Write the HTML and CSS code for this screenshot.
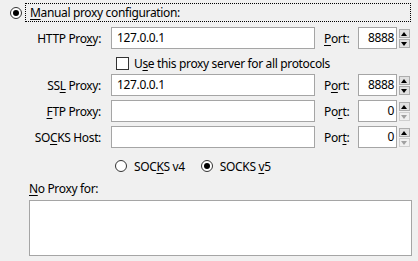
FILE: index.html
```html
<!DOCTYPE html>
<html lang="en">
<head>
  <meta charset="UTF-8">
  <title>Connection Settings</title>
  <link rel="stylesheet" href="styles.css">
</head>
<body>
  <div class="panel">
    <div class="mode">
      <span class="radio on"></span>
      <span class="focus"><u>M</u>anual proxy configuration:</span>
    </div>

    <div class="row first">
      <label class="name">HTTP Pro<u>x</u>y:</label>
      <div class="field">127.0.0.1</div>
      <label class="port"><u>P</u>ort:</label>
      <div class="spin">
        <div class="num">8888</div>
        <div class="arrows">
          <span class="btn up"></span>
          <span class="btn down"></span>
        </div>
      </div>
    </div>

    <div class="check-row">
      <span class="box"></span>
      <span>U<u>s</u>e this proxy server for all protocols</span>
    </div>

    <div class="row">
      <label class="name">SS<u>L</u> Proxy:</label>
      <div class="field">127.0.0.1</div>
      <label class="port">P<u>o</u>rt:</label>
      <div class="spin">
        <div class="num">8888</div>
        <div class="arrows">
          <span class="btn up"></span>
          <span class="btn down"></span>
        </div>
      </div>
    </div>

    <div class="row">
      <label class="name"><u>F</u>TP Proxy:</label>
      <div class="field"></div>
      <label class="port">Po<u>r</u>t:</label>
      <div class="spin">
        <div class="num">0</div>
        <div class="arrows">
          <span class="btn up"></span>
          <span class="btn down off"></span>
        </div>
      </div>
    </div>

    <div class="row">
      <label class="name">SO<u>C</u>KS Host:</label>
      <div class="field"></div>
      <label class="port">Por<u>t</u>:</label>
      <div class="spin">
        <div class="num">0</div>
        <div class="arrows">
          <span class="btn up"></span>
          <span class="btn down off"></span>
        </div>
      </div>
    </div>

    <div class="socks">
      <span class="opt"><span class="radio"></span><span>SOC<u>K</u>S v4</span></span>
      <span class="opt"><span class="radio on"></span><span>SOCKS <u>v</u>5</span></span>
    </div>

    <div class="noproxy"><u>N</u>o Proxy for:</div>
    <div class="area"></div>
  </div>
</body>
</html>
```

FILE: styles.css
```css
body {
  margin: 0;
  background: #f0f0f0;
  font-family: "Noto Sans", sans-serif;
  font-size: 12px;
  letter-spacing: -0.35px;
  color: #000;
}

u {
  text-decoration-thickness: 1px;
  text-underline-offset: 2px;
}

.panel {
  width: 418px;
  height: 261px;
  padding-top: 3px;
  box-sizing: border-box;
}

.radio {
  display: inline-block;
  box-sizing: border-box;
  width: 12px;
  height: 12px;
  border: 1px solid #333;
  border-radius: 50%;
  background: #fff;
  position: relative;
}

.radio.on::after {
  content: "";
  position: absolute;
  left: 2px;
  top: 2px;
  width: 6px;
  height: 6px;
  border-radius: 50%;
  background: #000;
}

.mode {
  display: flex;
  align-items: center;
  height: 19px;
}

.mode .radio {
  margin-left: 10px;
  margin-right: 3px;
}

.focus {
  box-sizing: border-box;
  width: 386px;
  height: 19px;
  line-height: 17px;
  padding-left: 4px;
  border: 1px dotted #000;
}

.row {
  display: flex;
  align-items: center;
  height: 22px;
  margin-top: 4px;
}

.row.first {
  margin-top: 5px;
}

.name {
  width: 101px;
  text-align: right;
  margin-right: 10px;
}

.field {
  box-sizing: border-box;
  width: 204px;
  height: 22px;
  line-height: 20px;
  padding-left: 5px;
  border: 1px solid #a5a5a5;
  background: #fff;
}

.port {
  width: 34px;
  margin-left: 9px;
}

.spin {
  display: flex;
  align-items: center;
}

.num {
  box-sizing: border-box;
  width: 39px;
  height: 22px;
  line-height: 20px;
  padding-right: 2px;
  text-align: right;
  border: 1px solid #a5a5a5;
  background: #fff;
}

.arrows {
  display: flex;
  flex-direction: column;
  gap: 1px;
  margin-left: 2px;
}

.btn {
  box-sizing: border-box;
  width: 11px;
  height: 9px;
  border: 1px solid #adadad;
  background: #e1e1e1;
  position: relative;
}

.btn::after {
  content: "";
  position: absolute;
  left: 1px;
  border-left: 3.5px solid transparent;
  border-right: 3.5px solid transparent;
}

.btn.up::after {
  top: 2px;
  border-bottom: 4px solid #000;
}

.btn.down::after {
  top: 2px;
  border-top: 4px solid #000;
}

.btn.off {
  border-color: #cfcfcf;
  background: #f0f0f0;
}

.btn.down.off::after {
  border-top-color: #a0a0a0;
}

.check-row {
  display: flex;
  align-items: center;
  height: 13px;
  margin-top: 8px;
  margin-bottom: 4px;
  padding-left: 116px;
}

.box {
  box-sizing: border-box;
  width: 13px;
  height: 13px;
  border: 1px solid #333;
  background: #fff;
  margin-right: 5px;
}

.socks {
  display: flex;
  align-items: center;
  height: 12px;
  margin-top: 12px;
  padding-left: 115px;
}

.opt {
  display: flex;
  align-items: center;
}

.opt .radio {
  margin-right: 7px;
}

.opt + .opt {
  margin-left: 16px;
}

.noproxy {
  margin-top: 8px;
  padding-left: 29px;
  height: 18px;
  line-height: 18px;
}

.area {
  box-sizing: border-box;
  width: 383px;
  height: 56px;
  margin-top: 2px;
  margin-left: 29px;
  border: 1px solid #a5a5a5;
  background: #fff;
}
```
